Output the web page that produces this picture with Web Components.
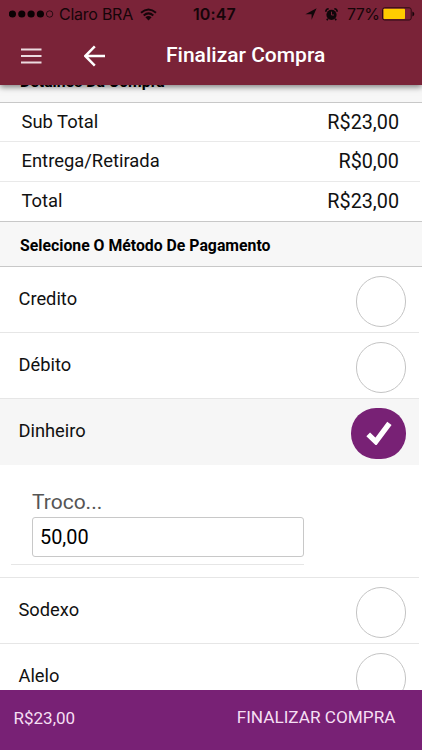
<!DOCTYPE html>
<html lang="pt-BR">
<head>
<meta charset="utf-8">
<title>Finalizar Compra</title>
<style>
html,body{margin:0;height:100%;overflow:hidden;background:#fff}
body{font-family:Roboto,"Liberation Sans",sans-serif;color:#111}
</style>
</head>
<body>
<checkout-app></checkout-app>
<script>
const define = (name, html) => customElements.define(name, class extends HTMLElement {
  connectedCallback() {
    if (this.shadowRoot) return;
    const t = document.createElement('template');
    t.innerHTML = html;
    this.attachShadow({mode: 'open'}).append(t.content.cloneNode(true));
  }
});

define('status-bar', `
<style>
:host{display:flex;height:28px;box-sizing:border-box;padding:0 7px 0 9px;align-items:center;color:#160509;font:400 16px/28px Inter,"Liberation Sans",sans-serif;white-space:nowrap}
.left{display:flex;align-items:center;width:184px}
.right{display:flex;align-items:center;margin-left:auto}
svg{display:block;flex:none}
.carrier{margin:0 7px 0 5px;width:74px;letter-spacing:-.25px}
.time{font-weight:600;letter-spacing:.1px}
.pct{margin:0 4px 0 9px;width:31px;letter-spacing:-.6px}
</style>
<div class="left">
<svg width="45" height="10" viewBox="0 0 45 10"><g fill="#0b0204"><circle cx="3.4" cy="5" r="3.6"/><circle cx="12.8" cy="5" r="3.6"/><circle cx="22.1" cy="5" r="3.6"/><circle cx="31.4" cy="5" r="3.6"/></g><circle cx="40.6" cy="5" r="3.2" fill="none" stroke="#16050a" stroke-width=".8"/></svg>
<span class="carrier">Claro BRA</span>
<svg width="17" height="13" viewBox="0 0 17 13"><g fill="none" stroke="#16050a" stroke-width="2"><path d="M1 4.7Q8.5-1.8 16 4.7M3.7 7.5Q8.5 3.3 13.3 7.5"/></g><path d="M5.4 9.3Q8.5 6.7 11.6 9.3L8.5 12.5Z" fill="#16050a"/></svg>
</div>
<span class="time">10:47</span>
<div class="right">
<svg width="12" height="12" viewBox="0 0 12 12"><path d="M11.6.3 6.6 11.8V6.2H.4Z" fill="#10070a"/></svg>
<svg style="margin-left:8px" width="13" height="13" viewBox="0 0 13 13"><circle cx="6.5" cy="6.8" r="5.1" fill="#10070a"/><path d="M.8 3.7Q.9 1 3.7.8M9.3.8Q12.1 1 12.2 3.7M2.8 10.8 1.8 12.2M10.2 10.8l1 1.4" fill="none" stroke="#10070a" stroke-width="1.6"/><path d="M6.5 3.7V7H9" fill="none" stroke="#7a2338" stroke-width="1"/></svg>
<span class="pct">77%</span>
<svg width="33" height="14" viewBox="0 0 33 14"><rect x=".6" y=".8" width="28.6" height="12.2" rx="2" fill="none" stroke="#2b0a12" stroke-width="1"/><rect x="1.5" y="1.8" width="21.5" height="10.2" rx=".8" fill="#fc0"/><path d="M30.4 4.5Q32.3 5 32.3 7T30.4 9.4Z" fill="#16050a"/></svg>
</div>`);

define('app-bar', `
<style>
:host{display:block;flex:none;height:85px;box-sizing:border-box;background:#7a2338;position:relative;z-index:1;box-shadow:0 2px 6px rgba(0,0,0,.5);color:#fff}
.bar{display:flex;align-items:center;height:55px}
svg{display:block;flex:none}
.menu{margin-left:21px}.back{margin-left:42px}
h1{margin:0 0 0 60px;font:500 21px/55px Roboto,sans-serif;white-space:nowrap}
</style>
<status-bar></status-bar>
<div class="bar">
<svg class="menu" width="21" height="16" viewBox="0 0 21 16"><path d="M0 1.5H20.5M0 8H20.5M0 14.5H20.5" stroke="#ecdbe0" stroke-width="2"/></svg>
<svg class="back" width="22" height="22" viewBox="0 0 22 22"><path d="M21 11H1.7M10.8 1.3 1.2 11l9.6 9.7" fill="none" stroke="#fff" stroke-width="2.5"/></svg>
<h1><slot></slot></h1>
</div>`);

define('section-title', `
<style>:host{display:block;height:46px;box-sizing:border-box;padding-left:20px;background:#f7f7f7;border:solid #c8c8c8;border-width:1px 0;font-weight:700;font-size:15.8px;line-height:47px;color:#000;white-space:nowrap}</style>
<slot></slot>`);

define('total-row', `
<style>
:host{display:flex;justify-content:space-between;height:39.33px;box-sizing:border-box;margin-right:2px;padding:0 21px 0 21.5px;border-bottom:1px solid #e9e9e9;font-size:18.4px;line-height:37px;white-space:nowrap}
:host(:last-of-type){border-bottom-color:transparent}
.value{font-size:19.8px;line-height:39px}
</style>
<span><slot></slot></span><span class="value"><slot name="value"></slot></span>`);

define('pay-option', `
<style>
:host{display:flex;justify-content:space-between;height:66px;box-sizing:border-box;margin-right:3px;padding:0 13px 0 18.5px;border-bottom:1px solid #e6e6e6;font-size:18.3px;line-height:64px;white-space:nowrap}
:host([checked]){background:#f6f6f6;border-color:#f6f6f6}
.mark{width:50px;height:51px;box-sizing:border-box;margin-top:9px;border:1.5px solid #c4c4c4;border-radius:25px;flex:none}
svg{display:none}
:host([checked]) .mark{width:55px;border:0;background:#782175;display:flex;align-items:center;justify-content:center}
:host([checked]) svg{display:block}
</style>
<span><slot></slot></span>
<div class="mark"><svg width="26" height="24" viewBox="0 0 26 24"><path d="M2.2 13.4 9.8 20.6 23.4 2.3" fill="none" stroke="#fff" stroke-width="5.4"/></svg></div>`);

define('change-field', `
<style>
:host{display:block;height:113px;box-sizing:border-box;padding:22px 0 0 11px;margin-right:3px;border-bottom:1px solid #e6e6e6}
.item{width:293px;height:78px;box-sizing:border-box;border-bottom:1px solid #e6e6e6;padding-left:21px}
label{display:block;font-size:21px;line-height:30px;color:#555}
.box{width:272px;height:40px;box-sizing:border-box;border:1.5px solid #c8c8c8;border-radius:3px;padding-left:7px;font-size:19.9px;line-height:39px;color:#000}
</style>
<div class="item"><label><slot></slot></label><div class="box"><slot name="value"></slot></div></div>`);

define('checkout-footer', `
<style>
:host{display:flex;justify-content:space-between;flex:none;height:60px;box-sizing:border-box;padding:0 26.5px 0 13.5px;background:#782175;color:#f5dff3;white-space:nowrap;position:relative;z-index:1}
.total{font-size:17px;line-height:57px}
.action{font-size:17.2px;line-height:54px}
</style>
<span class="total"><slot name="total"></slot></span><span class="action"><slot></slot></span>`);

define('checkout-app', `
<style>
:host{display:flex;flex-direction:column;width:422px;height:750px;overflow:hidden;background:#fff}
main{flex:1;min-height:0;overflow:hidden}
.scroll{margin-top:-28px}
</style>
<app-bar>Finalizar Compra</app-bar>
<main><div class="scroll">
<section-title>Detalhes Da Compra</section-title>
<total-row>Sub Total<span slot="value">R$23,00</span></total-row>
<total-row>Entrega/Retirada<span slot="value">R$0,00</span></total-row>
<total-row>Total<span slot="value">R$23,00</span></total-row>
<section-title>Selecione O Método De Pagamento</section-title>
<pay-option>Credito</pay-option>
<pay-option>Débito</pay-option>
<pay-option checked>Dinheiro</pay-option>
<change-field>Troco...<span slot="value">50,00</span></change-field>
<pay-option>Sodexo</pay-option>
<pay-option>Alelo</pay-option>
</div></main>
<checkout-footer><span slot="total">R$23,00</span>FINALIZAR COMPRA</checkout-footer>`);
</script>
</body>
</html>
